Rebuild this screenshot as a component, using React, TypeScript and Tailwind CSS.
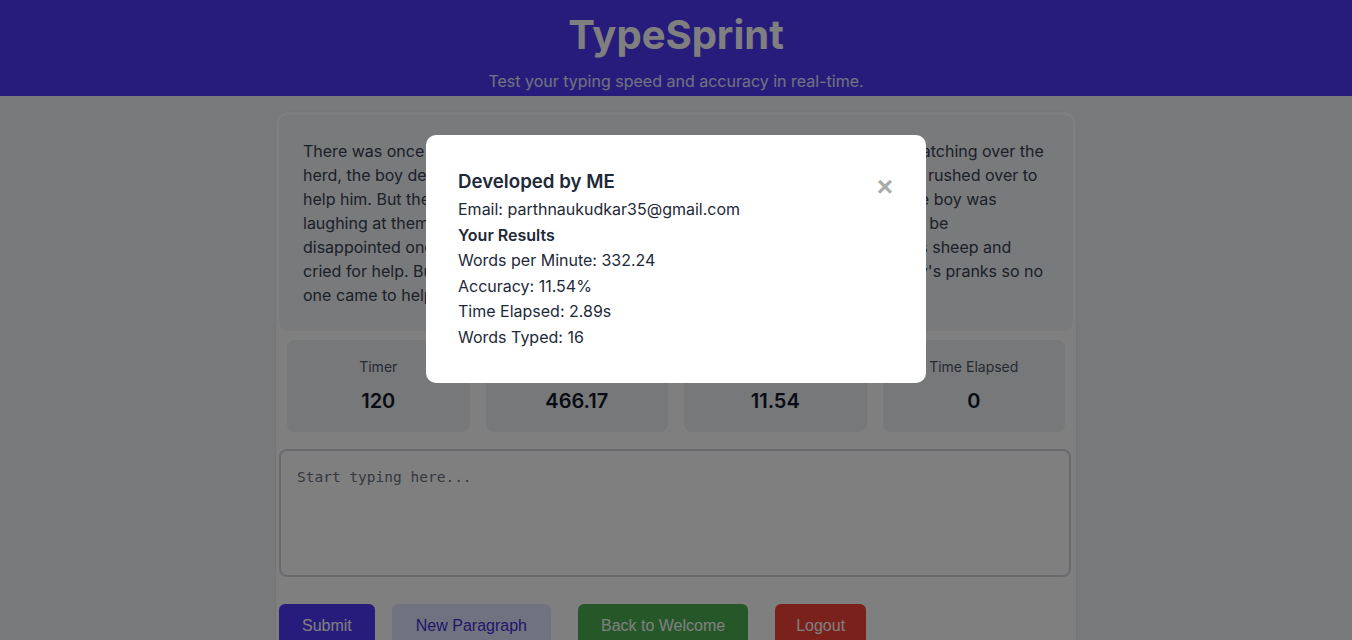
import { useState } from 'react';

const paragraph =
  "There was once a shepherd boy who lived in a quiet village. Late one day, while watching over the herd, the boy decided to trick the villagers by crying out 'Wolf! Wolf!' The villagers rushed over to help him. But there was no wolf to be found, and the villagers were angry when the boy was laughing at them. The boy played the trick again, and the villagers came by only to be disappointed once more. And one evening a real wolf came and attacked the boy's sheep and cried for help. But this time the villagers believed it was just another one of the boy's pranks so no one came to help him, and the wolf ate the sheep.";

const stats = [
  { label: 'Timer', value: '120' },
  { label: 'WPM', value: '466.17' },
  { label: 'Accuracy', value: '11.54' },
  { label: 'Time Elapsed', value: '0' },
];

export default function App() {
  const [open, setOpen] = useState(true);
  const [typed, setTyped] = useState('');

  return (
    <div className="min-h-screen bg-gray-100 font-['Inter',sans-serif]">
      {/* Header */}
      <header className="h-24 bg-indigo-600 pt-[11px] text-center">
        <h1 className="text-[40px] font-bold leading-[48px] text-white">TypeSprint</h1>
        <p className="mt-[10px] text-base leading-6 text-indigo-100">
          Test your typing speed and accuracy in real-time.
        </p>
      </header>

      {/* Main card */}
      <main className="mx-auto mt-4 w-[800px] rounded-xl bg-white p-[3px] shadow-sm">
        <div className="rounded-lg bg-gray-100 p-6 text-base leading-6 text-gray-700">
          {paragraph}
        </div>

        <div className="mt-px grid grid-cols-4">
          {stats.map((s) => (
            <div key={s.label} className="m-2 rounded-lg bg-gray-200/60 px-4 py-[17px] text-center">
              <div className="text-sm leading-5 text-gray-600">{s.label}</div>
              <div className="mt-[10px] text-xl font-semibold leading-7 text-gray-900">{s.value}</div>
            </div>
          ))}
        </div>

        <textarea
          value={typed}
          onChange={(e) => setTyped(e.target.value)}
          placeholder="Start typing here..."
          className="mt-[9px] block h-32 w-[792px] resize-none rounded-lg border-2 border-gray-300 bg-white px-4 pb-4 pt-[16px] font-['DejaVu_Sans_Mono',monospace] text-[14.5px] leading-5 text-gray-800 outline-none placeholder:text-gray-500"
        />

        <div className="mt-[27px] flex items-start pb-6 font-['Liberation_Sans',Arial,sans-serif] text-base">
          <button className="rounded-md bg-indigo-600 px-[23px] py-2.5 leading-6 text-white">Submit</button>
          <button className="ml-[17px] rounded-md bg-indigo-100 px-6 py-2.5 leading-6 text-indigo-700">New Paragraph</button>
          <button className="ml-[27px] rounded-md bg-[#4caf50] px-[23px] py-2.5 leading-6 text-white">Back to Welcome</button>
          <button className="ml-[27px] rounded-md bg-[#f44336] px-[21px] py-2.5 leading-6 text-white">Logout</button>
        </div>
      </main>

      {/* Results modal */}
      {open && (
        <div className="fixed inset-0 bg-black/50">
          <div className="relative mx-auto mt-[135px] w-[500px] rounded-[10px] bg-white p-8 text-gray-800">
            <button
              onClick={() => setOpen(false)}
              className="absolute right-[33px] top-[38px] font-['Liberation_Sans',Arial,sans-serif] text-[28px] font-bold leading-none text-[#aaa]"
            >
              ×
            </button>
            <h2 className="pt-px text-[18.7px] font-semibold leading-7 text-gray-800">Developed by ME</h2>
            <div className="mt-px text-base leading-[1.6]">
              <p>Email: parthnaukudkar35@gmail.com</p>
              <p className="font-semibold">Your Results</p>
              <p>Words per Minute: 332.24</p>
              <p>Accuracy: 11.54%</p>
              <p>Time Elapsed: 2.89s</p>
              <p>Words Typed: 16</p>
            </div>
          </div>
        </div>
      )}
    </div>
  );
}
